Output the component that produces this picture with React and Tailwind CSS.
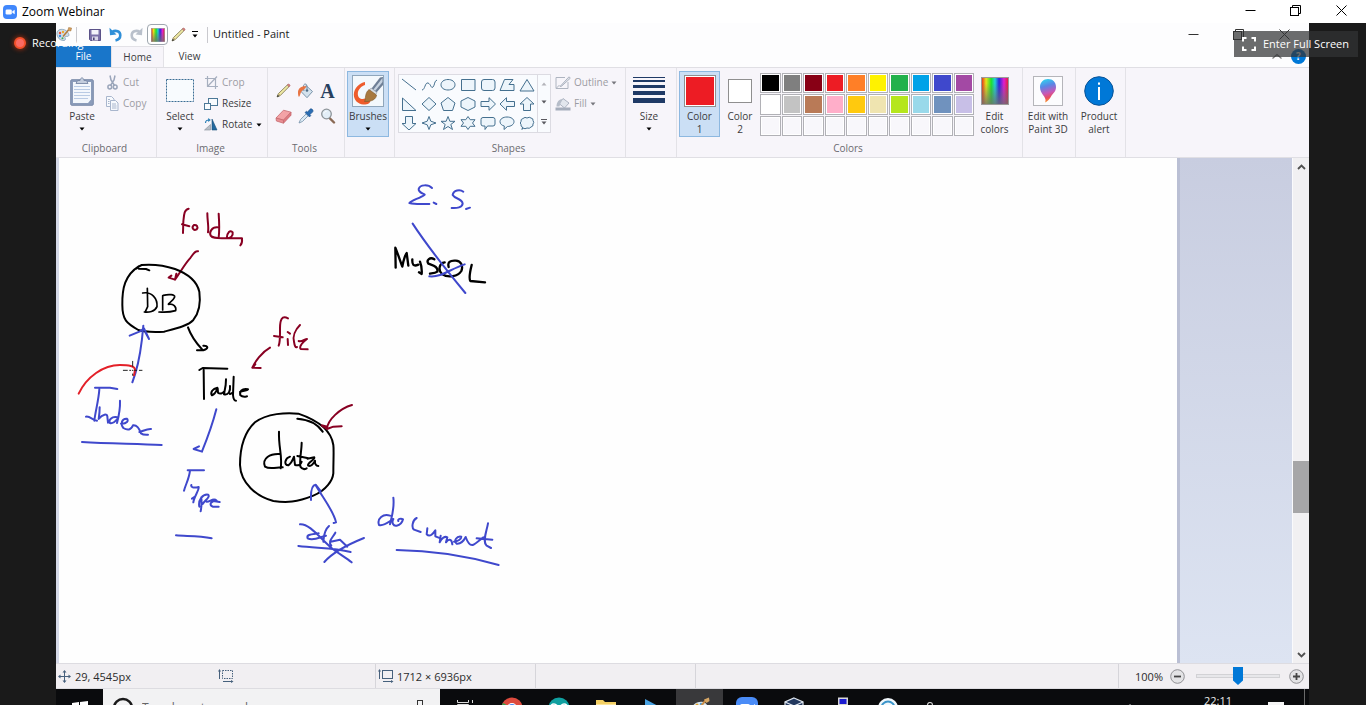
import React from "react";

const Caret = ({ className = "text-black" }) => (
  <svg width="6" height="4" viewBox="0 0 6 4" className={className} fill="currentColor" aria-hidden="true">
    <path d="M0.5 0.5h5L3 3.5z" />
  </svg>
);

/* ---------- icons ---------- */

const ZoomLogo = () => (
  <svg width="14" height="14" viewBox="0 0 14 14" aria-hidden="true">
    <rect width="14" height="14" rx="4" fill="#4087fc" />
    <rect x="2.6" y="4.4" width="6.2" height="5.2" rx="1.4" fill="#fff" />
    <path d="M9.3 6.3l2.4-1.6v4.6L9.3 7.7z" fill="#fff" />
  </svg>
);

const Palette = () => (
  <svg width="16" height="15" viewBox="0 0 16 15" aria-hidden="true">
    <path d="M1 7.5C0.5 4 3 2 6.5 2.4c3 .3 4.6 1.6 6 4 1.3 2.5-.6 3.4-2.2 3-1.4-.3-1.8.8-1 2 .8 1.300-.6 2.400-2.800 2C3.500 13 1.400 10.500 1 7.500z" fill="#cfdde8" stroke="#7f9cb3" strokeWidth=".8" />
    <circle cx="4" cy="6" r="1.200" fill="#e8553a" />
    <circle cx="7" cy="5" r="1.200" fill="#f0a92e" />
    <circle cx="4" cy="9" r="1.200" fill="#3c8be0" />
    <circle cx="6.500" cy="11.200" r="1" fill="#3fa95a" />
    <path d="M7 9.500L12.500 3" stroke="#b37a3c" strokeWidth="1.500" />
    <path d="M12 3.600L12.600 .6l3 .4-.8 3z" fill="#d9a15e" stroke="#9a6c34" strokeWidth=".5" />
  </svg>
);

const Save = () => (
  <svg width="12" height="12" viewBox="0 0 12 12" aria-hidden="true">
    <path d="M.5.500h11v11H1.500l-1-1z" fill="#7b70a8" stroke="#5b5288" />
    <rect x="2.500" y="1" width="7" height="4.500" fill="#f4f3fa" />
    <rect x="3" y="7.500" width="6" height="4" fill="#d9d6e8" />
    <rect x="4" y="8.500" width="1.600" height="2.500" fill="#4a4274" />
  </svg>
);

const Undo = ({ flip, color }) => (
  <svg width="13" height="15" viewBox="0 0 13 15" className={flip ? "-scale-x-100" : ""} aria-hidden="true">
    <path d="M3 5C7 2.500 11.300 4.500 11.300 8.300c0 2.700-1.800 4.500-4.800 5.200" fill="none" stroke={color} strokeWidth="2.600" />
    <path d="M.5.800L1 8.300l6.500-.8z" fill={color} />
  </svg>
);

const Spectrum = ({ w, h, id }) => (
  <svg width={w} height={h} viewBox="0 0 28 28" preserveAspectRatio="none" aria-hidden="true">
    <defs>
      <linearGradient id={id}>
        <stop offset="0" stopColor="#e8231c" />
        <stop offset=".17" stopColor="#e8e21a" />
        <stop offset=".36" stopColor="#1de02c" />
        <stop offset=".5" stopColor="#22d0d8" />
        <stop offset=".65" stopColor="#2a25dc" />
        <stop offset=".83" stopColor="#e01fd0" />
        <stop offset="1" stopColor="#e0202c" />
      </linearGradient>
      <linearGradient id={id + "v"} x2="0" y2="1">
        <stop offset=".2" stopColor="#6d6d6d" stopOpacity="0" />
        <stop offset="1" stopColor="#6d6d6d" stopOpacity=".8" />
      </linearGradient>
    </defs>
    <rect x=".5" y=".5" width="27" height="27" fill={`url(#${id})`} stroke="#9a9a9a" />
    <rect x="1" y="1" width="26" height="26" fill={`url(#${id}v)`} />
  </svg>
);

const Pencil = () => (
  <svg width="15" height="15" viewBox="0 0 15 15" aria-hidden="true">
    <path d="M1 14l1.400-3.400L11.300 2l1.700 1.700-8.800 8.900z" fill="#efe9a4" stroke="#77704a" strokeWidth=".8" />
    <path d="M11.300 2l.9-.9c.6-.5 2.300 1.100 1.800 1.800l-1 .8z" fill="#e08a86" stroke="#a15d5a" strokeWidth=".6" />
    <path d="M1 14l.8-2.200 1.500 1.400z" fill="#333" />
    <path d="M2.600 10.800l1.600 1.600" stroke="#c9a86a" />
  </svg>
);

const Bucket = () => (
  <svg width="17" height="16" viewBox="0 0 17 16" aria-hidden="true">
    <path d="M9 2.500l6.500 6-5.500 6.200-6-6.200z" fill="#d3e1ec" stroke="#6f8ba3" strokeWidth=".9" />
    <path d="M7 8C6 4 6.500 1 8.200 1s2 2 1.800 5.500" fill="none" stroke="#6f8ba3" />
    <circle cx="10" cy="7.500" r="1.300" fill="#4f6d87" />
    <path d="M9.500 3.500C5 2.500 1 5 1 9.500c0 2 .3 3.500 1 4.500 1.300-1 1.300-4.500 2.500-5.500 1-1.200 3.500-2.500 5-5z" fill="#e87442" />
  </svg>
);

const Eraser = () => (
  <svg width="17" height="15" viewBox="0 0 17 15" aria-hidden="true">
    <path d="M1 9L8.500 1.200l7.500 2-7.500 8z" fill="#f3a3a6" stroke="#c76b70" strokeWidth=".8" />
    <path d="M1 9l7.500 2.200v3L1.400 12z" fill="#e98f94" stroke="#c76b70" strokeWidth=".8" />
    <path d="M8.500 11.200l7.500-8v3l-7.500 8z" fill="#e07a80" stroke="#c76b70" strokeWidth=".8" />
  </svg>
);

const Picker = () => (
  <svg width="16" height="16" viewBox="0 0 16 16" aria-hidden="true">
    <path d="M1 15l1.500-3.500 5.800-5.800 2 2-5.800 5.800z" fill="#dbe9f4" stroke="#7590a8" strokeWidth=".8" />
    <path d="M7 4.500l1.500-1.200 1 .8L12 1.200c1.500-1.200 3.800.8 2.800 2.600L12 6.600l.8 1-1.300 1.400z" fill="#2b6db3" stroke="#1c4f87" strokeWidth=".6" />
  </svg>
);

const Magnifier = () => (
  <svg width="16" height="16" viewBox="0 0 16 16" aria-hidden="true">
    <path d="M9.500 10l4.500 4.500" stroke="#8a6a55" strokeWidth="2.400" strokeLinecap="round" />
    <circle cx="6.500" cy="6" r="4.800" fill="#e3eef7" stroke="#8d9499" strokeWidth="1.300" />
    <path d="M3.800 5.500c.4-1.500 1.300-2 2.700-2" fill="none" stroke="#fff" />
  </svg>
);

const PasteIcon = () => (
  <svg width="24" height="29" viewBox="0 0 24 29" aria-hidden="true">
    <rect x=".7" y="2.700" width="22.600" height="25.600" rx="1.200" fill="#8b9cba" stroke="#7c8dab" />
    <path d="M3 5h18v17.500L18 26H3z" fill="#f3f7fc" />
    <path d="M4 9.500h16M4 12.500h16M4 15.500h16M4 18.500h16M4 21.500h14" stroke="#b9cbe4" strokeWidth="1.200" />
    <path d="M6 6.500l1.500-3H10C10.500 0 13.500 0 14 3.500h2.500l1.500 3z" fill="#c3cddd" stroke="#7788a5" strokeWidth=".9" />
  </svg>
);

const Cut = () => (
  <svg width="11" height="15" viewBox="0 0 11 15" fill="none" stroke="#9aa5ba" aria-hidden="true">
    <path d="M3 .5L4 5l3.500 5.500M8 .5L7 5l-3.500 5.500" strokeWidth="1.500" />
    <circle cx="2.800" cy="12" r="1.900" strokeWidth="1.500" />
    <circle cx="8.200" cy="12" r="1.900" strokeWidth="1.500" />
  </svg>
);

const Copy = () => (
  <svg width="13" height="15" viewBox="0 0 13 15" fill="#f7f9fd" stroke="#a9b6cd" aria-hidden="true">
    <path d="M.5.500h5l2.500 2.500v7.500H.500z" />
    <path d="M4.500 4.500h5l2.500 2.500v7.500H4.500z" />
    <path d="M6 8h4M6 10h4.500M6 12h4.500M2 3.500h2M2 5.500h1.500M2 7.500h1.500" />
  </svg>
);

const SelectIcon = () => (
  <svg width="28" height="24" viewBox="0 0 28 24" aria-hidden="true">
    <rect x=".5" y=".5" width="27" height="22" fill="#f8fbfe" stroke="#3a6d94" strokeDasharray="2 1" />
  </svg>
);

const Crop = () => (
  <svg width="13" height="13" viewBox="0 0 13 13" fill="none" stroke="#a7afbf" strokeWidth="1.200" aria-hidden="true">
    <path d="M2.500 0v10.500H13M0 2.500h10.500V13M2.500 10.500L12 .5" />
  </svg>
);

const Resize = () => (
  <svg width="14" height="12" viewBox="0 0 14 12" fill="#f8fbfe" stroke="#4c7897" aria-hidden="true">
    <rect x="4.500" y=".5" width="9" height="7" />
    <rect x=".5" y="5.500" width="6" height="6" />
  </svg>
);

const Rotate = () => (
  <svg width="14" height="13" viewBox="0 0 14 13" aria-hidden="true">
    <path d="M8 1l5 11H8z" fill="#24699e" stroke="#1c517b" strokeWidth=".6" />
    <path d="M6.500 6.500V12H.5z" fill="#b8bec6" stroke="#858d98" strokeWidth=".6" />
    <path d="M1.500 5C1.500 3 3 2 5 2" fill="none" stroke="#2a7fb5" strokeWidth="1.200" />
    <path d="M4.200 0l2.600 2-2.600 2z" fill="#2a7fb5" />
  </svg>
);

const BrushArt = () => (
  <svg width="32" height="32" viewBox="0 0 32 32" aria-hidden="true">
    <rect x=".5" y=".5" width="31" height="31" fill="#f3f8fc" stroke="#8fa6bb" />
    <path d="M13 7C7.500 8 2 13 1.800 19.500c0 5.500 4 9.500 9.500 10 4.500.2 7-1.500 7-3.500l-5-2.500c-4 1.500-7.500-.5-7.500-4.500C5.800 14.500 9.500 11 13 10z" fill="#ee5c2c" />
    <path d="M19.500 13.500L28 2.500l3-.5v8l-6.500 7.500z" fill="#6e7f96" />
    <path d="M21.500 14.500L30.500 3v4L23 16z" fill="#c5d2e0" />
    <path d="M19 13l6 4.500-2 3-6-4.500z" fill="#d8dde3" stroke="#8d97a3" strokeWidth=".6" />
    <path d="M17 14.500l7.500 5.500c0 4-5 7-12 6.500C14 24 12.500 18 17 14.500z" fill="#a8793f" stroke="#80592b" strokeWidth=".6" />
  </svg>
);

const OutlineIcon = () => (
  <svg width="16" height="14" viewBox="0 0 16 14" fill="none" stroke="#aeb4c0" aria-hidden="true">
    <path d="M10 1.500H1v11h12V6" />
    <path d="M5 10.500L14 .8l1.300 1.400-8.700 8z" fill="#dfe3ea" />
    <path d="M1.500 12l3-3" />
  </svg>
);

const FillIcon = () => (
  <svg width="16" height="14" viewBox="0 0 16 14" aria-hidden="true">
    <path d="M8 1.500l6 4.500-4.500 5L4 6.500z" fill="#e2e6ed" stroke="#a5adbb" strokeWidth=".9" />
    <path d="M8 2C4 2 1.500 5 1.500 9.500h3C5 7 6 5 8 2z" fill="#b6bdc9" />
    <rect x=".5" y="10.500" width="15" height="3" fill="#a5adbb" />
  </svg>
);

const SizeIcon = () => (
  <svg width="32" height="28" viewBox="0 0 32 28" fill="#1f3a66" aria-hidden="true">
    <rect width="32" height="1" />
    <rect y="3" width="32" height="2" />
    <rect y="8" width="32" height="3" />
    <rect y="14" width="32" height="4" />
    <rect y="21" width="32" height="5" />
  </svg>
);

const Paint3D = () => (
  <svg width="30" height="30" viewBox="0 0 30 30" aria-hidden="true">
    <defs>
      <linearGradient id="p3d" x1=".3" y1="0" x2=".5" y2="1">
        <stop offset="0" stopColor="#2fd3ee" />
        <stop offset=".3" stopColor="#5a86e6" />
        <stop offset=".6" stopColor="#c657b8" />
        <stop offset=".8" stopColor="#ea4c60" />
        <stop offset="1" stopColor="#f9a21c" />
      </linearGradient>
    </defs>
    <rect x=".5" y=".5" width="29" height="29" fill="#fcfcfe" stroke="#b5b5ba" />
    <path d="M15 3c5 0 8 3.500 8 8 0 5-3.500 6.500-5 9.500-1 2.500-3.500 5-6 6 1.500-3-.5-5.500-2-7.500-1.500-2.300-3-4.500-3-8C7 6.500 10.500 3 15 3z" fill="url(#p3d)" />
  </svg>
);

const InfoIcon = () => (
  <svg width="30" height="30" viewBox="0 0 30 30" aria-hidden="true">
    <circle cx="15" cy="15" r="14.300" fill="#0078d7" stroke="#0a5396" />
    <rect x="14" y="11" width="2" height="13" fill="#fff" />
    <rect x="14" y="6.500" width="2" height="2.200" fill="#fff" />
  </svg>
);

const WinMin = () => (
  <svg width="11" height="11" viewBox="0 0 11 11" aria-hidden="true"><path d="M.5 5.500h10" stroke="currentColor" /></svg>
);
const WinRestore = () => (
  <svg width="11" height="11" viewBox="0 0 11 11" fill="none" stroke="currentColor" aria-hidden="true">
    <rect x=".5" y="2.500" width="8" height="8" />
    <path d="M2.500 2.500v-2h8v8h-2" />
  </svg>
);
const WinClose = () => (
  <svg width="11" height="11" viewBox="0 0 11 11" aria-hidden="true"><path d="M.5.500l10 10M10.500.500l-10 10" stroke="currentColor" /></svg>
);

const WindowButtons = ({ className }) => (
  <div className={"flex items-center " + className}>
    <button type="button" aria-label="Minimize" className="flex w-[45px] justify-center"><WinMin /></button>
    <button type="button" aria-label="Restore" className="flex w-[45px] justify-center"><WinRestore /></button>
    <button type="button" aria-label="Close" className="flex w-[46px] justify-center"><WinClose /></button>
  </div>
);

/* ---------- ribbon ---------- */

const Group = ({ label, width, children }) => (
  <section aria-label={label} className={"flex flex-none flex-col border-r border-[#e3e2e7] " + width}>
    <div className="flex flex-1 pt-[3px]">{children}</div>
    <div className="h-[17px] pr-[3px] text-center leading-[17px] text-[#6b6b70]">{label}</div>
  </section>
);

const BigButton = ({ icon, lines, caret, className = "" }) => (
  <button type="button" className={"flex h-[66px] flex-col items-center border " + (className || "border-transparent")}>
    <span className="flex h-[38px] flex-none items-center justify-center">{icon}</span>
    {lines.map((l) => (
      <span key={l} className="whitespace-nowrap leading-[13px]">{l}</span>
    ))}
    {caret && <span className="flex h-3 items-center"><Caret /></span>}
  </button>
);

const RowButton = ({ icon, text, caret, muted }) => (
  <button type="button" className={"flex h-[21px] items-center gap-[3px] " + (muted ? "text-[#9c9ca3]" : "text-[#3b3b40]")}>
    <span className="flex w-4 justify-center">{icon}</span>
    <span>{text}</span>
    {caret && <Caret className={muted ? "text-[#77777d]" : "text-black"} />}
  </button>
);

const shapes = [
  ["Line", "M1 1l14 11"],
  ["Curve", "M1 12C4 12 4 4 7 5s3 6 5 4 1-6 4-7"],
  ["Oval", "M8 1.500c4 0 7 2.200 7 5.300S12 12 8 12 1 9.900 1 6.800 4 1.500 8 1.500z"],
  ["Rectangle", "M1.500 1.500h13.500v11H1.500z"],
  ["Rounded rectangle", "M4 1.500h8.500q2.500 0 2.500 2.500v6q0 2.500-2.500 2.500H4Q1.500 12.500 1.500 10V4Q1.500 1.500 4 1.500z"],
  ["Polygon", "M5.500 1.500h8.500L10 6.500h5v6H1z"],
  ["Triangle", "M8 1.500l7 11.500H1z"],
  ["Right triangle", "M1.500 1v12.500H15z"],
  ["Diamond", "M8 .5l7 6.500-7 6.500L1 7z"],
  ["Pentagon", "M8 .5l7 5.500-2.500 7.500h-9L1 6z"],
  ["Hexagon", "M8 .5l7 3.500v6l-7 3.500L1 10V4z"],
  ["Right arrow", "M1 4.500H9V.700L15.500 7 9 13.300V9.500H1z"],
  ["Left arrow", "M15.500 4.500H7.500V.700L1 7l6.500 6.300V9.500h8z"],
  ["Up arrow", "M8 .5l7 6.500h-3.500v6.500h-7V7H1z"],
  ["Down arrow", "M8 14l7-6.500h-3.500V.500h-7v7H1z"],
  ["Four-point star", "M8 .5l1.800 4.700L15 7 9.800 8.800 8 13.500 6.200 8.800 1 7l5.200-1.800z"],
  ["Five-point star", "M8 .5l1.900 4.800H15l-4.200 3.200 1.700 5L8 10.500 3.500 13.500l1.700-5L1 5.300h5.100z"],
  ["Six-point star", "M8 .5l2.200 3.200H15L12.500 7l2.500 3.300h-4.800L8 13.500l-2.200-3.200H1L3.500 7 1 3.700h4.800z"],
  ["Rounded callout", "M3 1.500h10q2 0 2 2v4.500q0 2-2 2H7.500L5 13.500V10H3Q1 10 1 8V3.500q0-2 2-2z"],
  ["Oval callout", "M8 1c4 0 7 2 7 4.700S12 10.500 8.500 10.500L5 13.500l.3-3.500C3 9.500 1 8 1 5.700 1 3 4 1 8 1z"],
  ["Cloud callout", "M4 2.500q2-2 4-.5 2.500-1.500 4 0 2.500.5 2 2.500 1.500 2 0 3.500.5 2.500-2 3-1.500 2-4 1-2 1.500-4 0L3 13.500l.5-2.500q-2-.5-1.500-2.500-1.500-1.500 0-3-.5-2.500 2-3z"],
];

const palette = [
  ["Black", "bg-black"], ["Gray", "bg-[#7f7f7f]"], ["Dark red", "bg-[#880015]"], ["Red", "bg-[#ed1c24]"], ["Orange", "bg-[#ff7f27]"],
  ["Yellow", "bg-[#fff200]"], ["Green", "bg-[#22b14c]"], ["Turquoise", "bg-[#00a2e8]"], ["Indigo", "bg-[#3f48cc]"], ["Purple", "bg-[#a349a4]"],
  ["White", "bg-white"], ["Light gray", "bg-[#c3c3c3]"], ["Brown", "bg-[#b97a57]"], ["Rose", "bg-[#ffaec9]"], ["Gold", "bg-[#ffc90e]"],
  ["Light yellow", "bg-[#efe4b0]"], ["Lime", "bg-[#b5e61d]"], ["Light turquoise", "bg-[#99d9ea]"], ["Blue-gray", "bg-[#7092be]"], ["Lavender", "bg-[#c8bfe7]"],
  ...Array.from({ length: 10 }, (_, i) => [`Custom color ${i + 1}`, "bg-[#f8f7fb]"]),
];

const Ribbon = () => (
  <div className="flex h-[91px] flex-none overflow-hidden border-y border-[#e0dfe4] bg-[#f7f5fa] text-[10px] text-[#3b3b40]">
    <Group label="Clipboard" width="w-[101px]">
      <BigButton icon={<PasteIcon />} lines={["Paste"]} caret className="ml-1 w-11 border-transparent" />
      <div className="flex flex-col pt-px">
        <RowButton icon={<Cut />} text="Cut" muted />
        <RowButton icon={<Copy />} text="Copy" muted />
      </div>
    </Group>
    <Group label="Image" width="w-[111px]">
      <BigButton icon={<SelectIcon />} lines={["Select"]} caret className="w-[46px] border-transparent" />
      <div className="flex flex-col pt-px">
        <RowButton icon={<Crop />} text="Crop" muted />
        <RowButton icon={<Resize />} text="Resize" />
        <RowButton icon={<Rotate />} text="Rotate" caret />
      </div>
    </Group>
    <Group label="Tools" width="w-[77px]">
      <div className="ml-[7px] grid h-[58px] grid-cols-3 grid-rows-2 place-items-center gap-x-[5px] pt-[7px]">
        <button type="button" aria-label="Pencil"><Pencil /></button>
        <button type="button" aria-label="Fill with color"><Bucket /></button>
        <button type="button" aria-label="Text" className="w-4 font-['Liberation_Serif',serif] text-[20px] font-bold leading-5 text-[#27405f]">A</button>
        <button type="button" aria-label="Eraser"><Eraser /></button>
        <button type="button" aria-label="Color picker"><Picker /></button>
        <button type="button" aria-label="Magnifier"><Magnifier /></button>
      </div>
    </Group>
    <Group label="" width="w-[50px]">
      <BigButton icon={<BrushArt />} lines={["Brushes"]} caret className="ml-[2px] w-[42px] border-[#8db8e0] bg-[#cbdff5]" />
    </Group>
    <Group label="Shapes" width="w-[231px]">
      <div className="ml-[3px] mt-[3px] flex h-[59px] w-[153px] border border-[#dcdbe2] bg-[#f9fbfe]">
        <div className="grid flex-1 grid-cols-7 grid-rows-3 place-items-center">
          {shapes.map(([name, d]) => (
            <button key={name} type="button" aria-label={name}>
              <svg width="16" height="14" viewBox="0 0 16 14" fill={name === "Line" || name === "Curve" ? "none" : "#edf5fb"} stroke="#45708f" strokeWidth="1" aria-hidden="true">
                <path d={d} />
              </svg>
            </button>
          ))}
        </div>
        <div className="flex w-[13px] flex-col items-center justify-around border-l border-[#dcdbe2]">
          <button type="button" aria-label="Scroll up" className="rotate-180"><Caret className="text-[#b4b4ba]" /></button>
          <button type="button" aria-label="Scroll down"><Caret className="text-[#5a5a60]" /></button>
          <button type="button" aria-label="More shapes" className="flex flex-col items-center gap-px border-t border-[#5a5a60] pt-px"><Caret className="text-[#5a5a60]" /></button>
        </div>
      </div>
      <div className="ml-1 flex flex-col pt-px">
        <RowButton icon={<OutlineIcon />} text="Outline" caret muted />
        <RowButton icon={<FillIcon />} text="Fill" caret muted />
      </div>
    </Group>
    <Group label="" width="w-[51px]">
      <BigButton icon={<SizeIcon />} lines={["Size"]} caret className="ml-px w-11 border-transparent" />
    </Group>
    <Group label="Colors" width="w-[346px]">
      <BigButton
        icon={<span className="block border border-[#8f8f8f] bg-white p-px"><span className="block h-[28px] w-[28px] bg-[#ed1c24]" /></span>}
        lines={["Color", "1"]}
        className="ml-[2px] w-[41px] border-[#8db8e0] bg-[#cbdff5]"
      />
      <BigButton icon={<span className="block h-6 w-6 border border-[#8f8f8f] bg-white" />} lines={["Color", "2"]} className="w-[40px] border-transparent" />
      <div className="mt-[2px] grid h-[63px] w-[214px] grid-cols-10 grid-rows-3 gap-px">
        {palette.map(([name, bg]) => (
          <button key={name} type="button" aria-label={name} className="flex border border-[#b1b1b6] bg-white p-px">
            <span className={"flex-1 " + bg} />
          </button>
        ))}
      </div>
      <BigButton icon={<Spectrum w={28} h={28} id="spec" />} lines={["Edit", "colors"]} className="w-[41px] border-transparent" />
    </Group>
    <Group label="" width="w-[53px]">
      <BigButton icon={<Paint3D />} lines={["Edit with", "Paint 3D"]} className="ml-[2px] w-[46px] border-transparent" />
    </Group>
    <Group label="" width="w-[50px]">
      <BigButton icon={<InfoIcon />} lines={["Product", "alert"]} className="w-[46px] border-transparent" />
    </Group>
  </div>
);

/* ---------- drawing ---------- */

const Ink = ({ x, y, color, d, w = 6 }) => (
  <g transform={`translate(${x} ${y}) scale(.33333)`}>
    <path d={d} fill="none" stroke={color} strokeWidth={w} strokeLinecap="round" strokeLinejoin="round" />
  </g>
);

const BLUE = "#3f48cc";
const MAROON = "#880022";

const Drawing = () => (
  <svg width="460" height="430" viewBox="59 158 460 430" className="flex-none" role="img" aria-label="Sketch of E.S. and MySQL terms">
    {/* folder */}
    <Ink x={60} y={195} color={MAROON} d="M386 41C372 44 372 60 370 80L369 114M366 88L388 94M402 90C393 98 400 108 410 103C416 95 410 89 402 90M442 55C442 80 447 95 444 112M476 56C478 85 479 105 476 128M472 97C455 96 447 112 452 122C458 131 475 129 500 130C501 112 511 103 518 112C520 122 512 130 500 130L546 130C547 140 546 146 541 151" />
    <Ink x={60} y={195} color={MAROON} d="M414 169C404 166 400 178 390 190C375 206 362 230 345 254M349 236L345 254L326 248L334 242" />
    {/* database circle */}
    <Ink x={60} y={195} color="#000" d="M236 214C195 240 186 280 187 330C187 375 200 385 235 405C255 412 290 411 312 410C350 400 385 392 400 375C420 350 422 320 418 290C410 255 380 235 345 222C310 210 270 208 245 210C235 214 229 221 229 221M236 221L258 222L268 226" />
    <Ink x={60} y={195} color="#000" w={5} d="M262 280L263 335L256 350M248 294C275 289 293 310 291 335C285 350 265 353 253 351M308 302L308 345M310 301C325 297 346 298 344 306C340 318 325 325 325 328C340 325 350 335 347 347C330 352 310 352 297 351" />
    <Ink x={60} y={195} color="#000" d="M384 397C392 420 405 440 427 464M411 466L430 466C446 462 446 451 430 452" />
    <Ink x={60} y={195} color={BLUE} d="M217 562L226 535C240 490 246 440 250 392M209 422L240 409L252 400L267 432L256 412" />
    {/* file */}
    <Ink x={60} y={195} color={MAROON} d="M684 370C665 360 660 375 660 400C660 420 661 440 656 452M642 423L668 427M683 411L690 416M683 432L684 450M720 390C705 405 698 425 702 440C704 455 707 458 711 456M716 438C724 442 735 432 741 432C730 440 716 454 722 462L743 463" />
    <Ink x={60} y={195} color={MAROON} d="M630 458C605 472 585 500 577 518L602 519M577 518L586 508" />
    {/* index */}
    <Ink x={60} y={350} color="#e32028" d="M56 131C80 80 130 45 180 45C205 45 226 48 225 60L222 76" />
    <Ink x={60} y={350} color="#222" w={3} d="M190 61H202M209 61H212M217 61H219M224 61H230M238 61H246M218 34V49M218 72V76" />
    <Ink x={60} y={350} color={BLUE} d="M105 113L150 113L172 117M118 118C116 150 106 185 103 212M78 200C90 198 98 210 111 212M119 172C119 190 117 200 116 207C128 192 142 190 142 200L144 218M180 152C181 180 176 200 171 219M172 202C155 198 144 212 150 219C160 222 168 212 174 205M183 221C200 222 208 212 200 206C186 205 180 222 190 234C203 242 213 240 219 226C232 224 238 236 243 250C250 255 255 254 264 254M238 246C248 244 260 236 273 237" />
    <Ink x={60} y={350} color={BLUE} d="M66 276C150 281 230 281 305 285" />
    {/* table */}
    <Ink x={60} y={350} color="#000" d="M418 60L428 54L502 56M431 60L432 147M472 113C458 115 450 128 456 136C465 132 470 122 473 115L474 128C480 133 488 130 492 125M498 88L497 105L492 133C505 136 512 124 510 108M521 80L519 135C520 148 525 152 528 152M510 132L519 128M540 126C552 122 562 121 564 118C545 114 538 125 541 136C548 142 555 140 561 139" />
    <Ink x={60} y={350} color={BLUE} d="M469 178C457 225 442 265 426 304M417 289L401 297L426 305" />
    {/* type */}
    <Ink x={60} y={350} color={BLUE} d="M383 361L432 361M390 361C388 385 378 400 372 422M394 405C392 412 400 415 416 411C418 420 402 440 400 457M396 446L405 440M424 442C425 455 425 470 422 484M418 470C414 450 428 432 444 434C452 440 436 450 428 462M440 455C450 456 460 442 470 452C452 452 446 465 458 470L476 470M455 452L479 456" />
    <Ink x={60} y={350} color={BLUE} d="M348 556C380 559 415 556 455 565" />
    {/* data circle */}
    <Ink x={60} y={350} color="#000" d="M715 191C680 187 620 190 585 217C555 245 540 290 540 345C542 400 590 440 640 453C680 459 710 457 760 437C800 420 818 390 820 370C820 330 822 300 820 285C815 250 785 215 715 191M712 206C750 209 775 225 788 245" />
    <Ink x={60} y={350} color="#000" d="M657 245C655 290 668 320 662 355M660 312C630 310 605 325 615 350C630 360 655 350 668 352M690 320C675 325 670 345 685 346C695 340 700 325 702 320L705 345C715 348 722 345 725 335M725 278C725 300 718 330 721 350C728 360 735 358 740 355M712 318L745 325M742 326L763 322C766 328 742 338 744 346C752 352 762 340 765 332C764 342 768 348 775 348" />
    <Ink x={290} y={395} color={MAROON} d="M186 30C150 40 112 75 111 102L130 95L155 94M111 102L95 91L112 95" />
    <Ink x={290} y={395} color={BLUE} d="M131 384L138 382C132 350 100 310 78 272M63 315C62 290 66 270 77 269L92 288" />
    {/* crossed-out word */}
    <Ink x={290} y={395} color={BLUE} d="M30 388C60 386 90 430 128 462C150 478 170 490 185 502M103 501C130 470 170 450 222 429M25 453C80 460 130 458 182 471M117 393C100 408 102 430 100 440M86 415C65 418 48 418 53 430C70 440 92 425 108 422M136 413C128 428 112 440 124 452M122 440L150 434L172 455" />
    {/* document */}
    <Ink x={290} y={395} color={BLUE} d="M310 308C314 340 305 365 300 388M300 362C280 355 260 370 267 390C285 394 298 378 310 372C304 384 310 394 320 392C330 390 337 382 339 373C333 369 322 372 325 378M380 369C367 375 364 398 372 404L392 411M412 400L410 418C420 428 430 415 436 406L436 424L446 428M452 422L449 442C455 428 465 423 472 427L468 442C475 432 485 430 487 448M492 440C504 440 514 432 514 425C500 422 490 438 500 446C510 447 520 440 527 426C532 440 538 452 548 450C560 445 572 432 580 427M594 385C590 410 576 440 590 452L603 459M560 430L607 434" />
    <Ink x={290} y={395} color={BLUE} d="M320 465C420 466 520 480 626 510" />
    {/* E.S. over crossed-out MySQL */}
    <Ink x={370} y={175} color={BLUE} d="M186 39C175 28 150 28 146 42C145 52 158 55 164 59C150 70 125 75 118 84C140 90 168 86 178 87M191 83L199 87M280 50C270 42 250 45 248 60C255 72 275 70 278 85C278 98 260 100 245 99M288 102L300 98" />
    <Ink x={370} y={175} color="#000" w={7} d="M77 278L76 218C85 240 92 262 97 275C100 255 108 235 110 234L115 272M127 253C126 268 130 276 145 269M150 260C156 275 156 285 155 297L147 292M193 253C180 245 168 255 175 266C190 272 205 275 202 290C195 295 185 295 180 296M224 262C207 264 204 286 216 297C235 310 264 304 274 288C280 273 273 256 256 257C240 256 232 262 236 276M305 270C300 290 296 310 301 318L345 322" />
    <Ink x={370} y={175} color={BLUE} d="M128 146C160 195 215 268 286 354M178 304C215 308 240 282 284 268" />
  </svg>
);

/* ---------- paint window ---------- */

const Sep = ({ h = "h-4" }) => <span className={"block w-px flex-none bg-[#c9c9ce] " + h} />;

const PaintTitle = () => (
  <header className="flex h-[23px] flex-none items-center bg-[#fdfdfe] text-[11px] text-[#1c1c1c]">
    <Palette />
    <span className="ml-1"><Sep /></span>
    <div className="ml-3 flex items-center gap-2">
      <button type="button" aria-label="Save"><Save /></button>
      <button type="button" aria-label="Undo"><Undo color="#2f8fd8" /></button>
      <button type="button" aria-label="Redo"><Undo color="#b9c0cb" flip /></button>
    </div>
    <button type="button" aria-label="Edit colors" className="ml-1 flex h-[21px] w-[21px] items-center justify-center rounded-sm border border-[#9ea6ae] bg-white"><Spectrum w={14} h={14} id="specSmall" /></button>
    <button type="button" aria-label="Pencil" className="ml-[3px]"><Pencil /></button>
    <button type="button" aria-label="Customize toolbar" className="ml-[6px] flex flex-col items-center border-t border-black pt-0.5"><Caret /></button>
    <span className="ml-[9px]"><Sep /></span>
    <h1 className="ml-[5px]">Untitled - Paint</h1>
    <WindowButtons className="ml-auto mr-[2px] text-[#333]" />
  </header>
);

const Tabs = () => (
  <nav className="flex h-[21px] flex-none bg-[#fdfdfe] text-[10px] text-[#3b3b40]">
    <button type="button" className="w-[55px] bg-[#1976ca] text-white">File</button>
    <button type="button" className="w-[53px] border-x border-t border-[#e3e2e7] bg-[#f7f5fa]">Home</button>
    <button type="button" className="w-[51px]">View</button>
    <div className="ml-auto flex items-center gap-[8px] pr-[3px]">
      <button type="button" aria-label="Collapse ribbon">
        <svg width="12" height="7" viewBox="0 0 12 7" aria-hidden="true"><path d="M1.500 5.500L6 1.500l4.500 4" fill="none" stroke="#777" strokeWidth="1.200" /></svg>
      </button>
      <button type="button" aria-label="Help" className="h-[15px] w-[15px] rounded-full bg-[#0078d7] font-bold leading-[15px] text-white">?</button>
    </div>
  </nav>
);

const Workspace = () => (
  <main className="flex min-h-0 flex-1 bg-[#c8cde0]">
    <div className="flex flex-1 overflow-hidden border-l-[3px] border-[#d5d9e8] bg-[#fefefe]">
      <Drawing />
    </div>
    <div className="w-[115px] flex-none border-l-[3px] border-[#babfd4] bg-linear-to-b from-[#c8cde0] to-[#dde4f2]" />
    <div className="flex w-[17px] flex-none flex-col items-center border-l border-[#fafafc] bg-[#f1f0f2]">
      <button type="button" aria-label="Scroll up" className="flex h-[18px] items-center">
        <svg width="9" height="6" viewBox="0 0 9 6" aria-hidden="true"><path d="M1 5l3.500-3.500L8 5" fill="none" stroke="#505050" strokeWidth="1.800" /></svg>
      </button>
      <div className="grow-[285]" />
      <div className="w-full grow-[52] bg-[#a6a6a8]" />
      <div className="grow-[134]" />
      <button type="button" aria-label="Scroll down" className="flex h-4 items-center">
        <svg width="9" height="6" viewBox="0 0 9 6" aria-hidden="true"><path d="M1 1l3.500 3.500L8 1" fill="none" stroke="#505050" strokeWidth="1.800" /></svg>
      </button>
    </div>
  </main>
);

const MoveIcon = () => (
  <svg width="13" height="13" viewBox="0 0 13 13" aria-hidden="true">
    <path d="M6.500 1v11M1 6.500h11" stroke="#46607c" />
    <path d="M6.500 0l2 2.500h-4zM6.500 13l2-2.500h-4zM0 6.500l2.500-2v4zM13 6.500l-2.500-2v4z" fill="#46607c" />
  </svg>
);

const DimIcon = ({ dashed }) => (
  <svg width="16" height="14" viewBox="0 0 16 14" fill="none" stroke="#46607c" aria-hidden="true">
    <rect x="4.500" y="1.500" width="10" height="8" strokeDasharray={dashed ? "1.500 1" : undefined} />
    <path d="M1.500 2v8M5 12.500h9" />
    <path d="M1.500 0l1.500 2.500H0zM15.500 12.500L13 11v3z" fill="#46607c" stroke="none" />
  </svg>
);

const StatusBar = () => (
  <footer className="flex h-[26px] flex-none items-center border-y border-[#dddce1] bg-[#f1eff2] text-[11px] text-[#2b2b2b]">
    <div className="flex h-full w-[160px] items-center gap-1 pl-[2px]"><MoveIcon /><span className="pt-[2px]">29, 4545px</span></div>
    <div className="flex h-full w-[160px] items-center border-r border-[#d6d5da] pl-[2px]"><DimIcon dashed /></div>
    <div className="flex h-full w-[160px] items-center gap-[3px] border-r border-[#d6d5da] pl-[2px]"><DimIcon /><span className="pt-[2px]">1712 × 6936px</span></div>
    <div className="h-full w-[160px] border-r border-[#d6d5da]" />
    <div className="ml-auto flex h-full items-center border-l border-[#d6d5da] pl-4 pr-[5px]">
      <label htmlFor="zoom" className="pt-[2px]">100%</label>
      <button type="button" aria-label="Zoom out" className="ml-[7px]">
        <svg width="15" height="15" viewBox="0 0 15 15" aria-hidden="true"><circle cx="7.500" cy="7.500" r="6.800" fill="#e3e3e5" stroke="#909094" /><path d="M4 7.500h7" stroke="#444" strokeWidth="1.800" /></svg>
      </button>
      <input
        id="zoom"
        type="range"
        defaultValue="50"
        className="ml-[11px] h-5 w-[84px] appearance-none bg-transparent [&::-webkit-slider-runnable-track]:h-[4px] [&::-webkit-slider-runnable-track]:border [&::-webkit-slider-runnable-track]:border-[#d2d2d5] [&::-webkit-slider-runnable-track]:bg-[#e7e7ea] [&::-webkit-slider-thumb]:-mt-2 [&::-webkit-slider-thumb]:h-[18px] [&::-webkit-slider-thumb]:w-[10px] [&::-webkit-slider-thumb]:appearance-none [&::-webkit-slider-thumb]:bg-[#0078d7] [&::-webkit-slider-thumb]:[clip-path:polygon(0_0,100%_0,100%_75%,50%_100%,0_75%)]"
      />
      <button type="button" aria-label="Zoom in" className="ml-[9px]">
        <svg width="15" height="15" viewBox="0 0 15 15" aria-hidden="true"><circle cx="7.500" cy="7.500" r="6.800" fill="#e3e3e5" stroke="#909094" /><path d="M4 7.500h7M7.500 4v7" stroke="#444" strokeWidth="1.800" /></svg>
      </button>
    </div>
  </footer>
);

/* ---------- taskbar ---------- */

const apps = [
  ["Task view", <svg width="18" height="18" viewBox="0 0 18 18" fill="none" stroke="#ddd"><path d="M1.500 1v2.500h11V1M1.500 5.500h11v7h-11zM16.500 1v3M16.500 7v8" /></svg>],
  ["Chrome", <svg width="22" height="22" viewBox="0 0 22 22"><circle cx="11" cy="11" r="10.500" fill="#dd4b3e" /><path d="M11 11h10.500A10.500 10.500 0 0 1 10 21.500z" fill="#fbc93d" /><path d="M11 11L2 6a10.500 10.500 0 0 0 8 15.500z" fill="#2da94f" /><circle cx="11" cy="11" r="5" fill="#fff" /><circle cx="11" cy="11" r="4" fill="#4587f3" /></svg>],
  ["Arduino", <svg width="22" height="22" viewBox="0 0 22 22"><circle cx="11" cy="11" r="10.500" fill="#10a0a0" /><path d="M11 11c-2-3-3.500-4-5-4a4 4 0 0 0 0 8c1.500 0 3-1 5-4zm0 0c2 3 3.500 4 5 4a4 4 0 0 0 0-8c-1.500 0-3 1-5 4z" fill="none" stroke="#fff" strokeWidth="1.500" /></svg>],
  ["File Explorer", <svg width="22" height="20" viewBox="0 0 22 20"><path d="M1 2h7l2 2h11v14H1z" fill="#f3cf63" /><path d="M1 6h20v12H1z" fill="#fbe49a" /></svg>],
  ["Visual Studio Code", <svg width="18" height="20" viewBox="0 0 18 20"><path d="M1 1l16 8.500L1 18z" fill="#49a3e3" /></svg>],
  ["Paint", <svg width="22" height="22" viewBox="0 0 22 22"><path d="M2 13C3 7 9 4 14 5c4 1 5 4 4 8s-5 6-8 6-8-2-8-6z" fill="#dce8ee" /><circle cx="8" cy="8" r="1.500" fill="#e0a32a" /><circle cx="12" cy="7" r="1.200" fill="#4b9bd8" /><path d="M12 9l5-6" stroke="#c98c45" strokeWidth="2" /><path d="M15 2.500l5-2 .5 3.500-3 2z" fill="#d7a766" /></svg>],
  ["Zoom", <svg width="22" height="22" viewBox="0 0 22 22"><rect width="22" height="22" rx="6" fill="#4a8cf7" /><rect x="4" y="7" width="10" height="8" rx="2" fill="#fff" /><path d="M15 10l4-3v8l-4-3z" fill="#fff" /></svg>],
  ["VirtualBox", <svg width="20" height="22" viewBox="0 0 20 22"><path d="M10 1l9 4v11l-9 5-9-5V5z" fill="#22385e" stroke="#dfe6ef" strokeWidth="1.200" /><path d="M1 5l9 4 9-4M10 9v12" fill="none" stroke="#dfe6ef" strokeWidth="1.200" /></svg>],
  ["PuTTY", <svg width="18" height="22" viewBox="0 0 18 22"><rect x="6" y=".5" width="10" height="8" fill="#d8d8d8" /><rect x="7.500" y="2" width="7" height="5" fill="#1b1bcf" /><path d="M13 8l3 2-5 4" stroke="#f0d53a" fill="none" strokeWidth="1.500" /></svg>],
  ["Viewer", <svg width="22" height="22" viewBox="0 0 22 22"><circle cx="11" cy="11" r="10" fill="#f2f8fc" /><circle cx="11" cy="11" r="6.500" fill="none" stroke="#3a94c9" strokeWidth="2" /><circle cx="11" cy="11" r="3" fill="#3a94c9" /></svg>],
];

const TrayIcons = () => (
  <svg width="230" height="12" viewBox="0 0 230 12" fill="none" stroke="#cfcfcf" className="flex-none" aria-hidden="true">
    <circle cx="6" cy="3" r="2.500" strokeWidth="1.200" />
    <path d="M6 6v5M40 6.500l4-2 4 2M67 3v2M71 3v2M75 4.500h9v6h-9M102 6q5-3 10 0M137 5q4-2 6-1M160 8l4-3v7M167 4q4 3 2 8M202 5l4-2v9" strokeWidth="1.200" />
  </svg>
);

const Taskbar = () => (
  <div className="h-4 flex-none overflow-hidden bg-[#0a0b0d]">
    <div className="flex h-[38px] items-center">
      <button type="button" aria-label="Start" className="flex w-[47px] flex-none justify-center">
        <svg width="16" height="14" viewBox="0 0 16 14" fill="#fff" aria-hidden="true"><path d="M0 2l7-1v6H0zM8 1l8-1v7H8zM0 8h7v6l-7-1zM8 8h8v7l-8-1z" /></svg>
      </button>
      <label className="flex h-full w-[337px] flex-none items-center bg-[#f2f2f3] pl-[9px]">
        <svg width="22" height="22" viewBox="0 0 22 22" aria-hidden="true"><circle cx="11" cy="11" r="9" fill="none" stroke="#1a1a1a" strokeWidth="2.500" /></svg>
        <input type="text" aria-label="Search" placeholder="Type here to search" className="ml-2 min-w-0 flex-1 bg-transparent text-[12px] outline-none placeholder:text-[#666]" />
        <svg width="10" height="16" viewBox="0 0 10 16" fill="none" stroke="#333" className="mr-[15px]" aria-hidden="true"><rect x="2.500" y=".5" width="5" height="9" /><path d="M.5 7v3q4.500 4 9 0V7M5 12v4" /></svg>
      </label>
      <div className="flex h-full pl-px">
        {apps.map(([name, icon]) => (
          <button key={name} type="button" aria-label={name} className={"flex w-[47px] items-center justify-center " + (name === "Paint" ? "bg-[#39393b]" : "")}>{icon}</button>
        ))}
      </div>
      <div className="ml-auto flex h-full flex-none items-center text-[11px] text-[#ececec]">
        <TrayIcons />
        <span className="w-[50px] pl-2 pt-1">ENG</span>
        <time className="mr-9 self-start leading-[23px]">22:11</time>
        <button type="button" aria-label="Notifications" className="mr-5">
          <svg width="16" height="16" viewBox="0 0 16 16" aria-hidden="true"><path d="M0 2h16v11h-6l-3 3v-3H0z" fill="#f4f4f4" /><path d="M3 5.500h10" stroke="#333" /></svg>
        </button>
        <span className="mr-1 h-full w-px bg-[#6a6a6a]" />
      </div>
    </div>
  </div>
);

export default function App() {
  return (
    <div className="relative flex h-screen flex-col overflow-hidden bg-[#1a1a1a] font-['Open_Sans','Noto_Sans',sans-serif]">
      <header className="flex h-[23px] flex-none items-center bg-white pl-[3px] text-[12px] text-black">
        <ZoomLogo />
        <span className="ml-[5px]">Zoom Webinar</span>
        <WindowButtons className="ml-auto mr-[2px] pb-[2px]" />
      </header>
      <div className="ml-14 mr-[57px] flex min-h-0 flex-1 flex-col">
        <PaintTitle />
        <Tabs />
        <Ribbon />
        <Workspace />
        <StatusBar />
        <Taskbar />
      </div>
      <div className="absolute left-[14px] top-[35px] flex items-center gap-[6px] text-[11px] leading-4 text-white">
        <span className="h-3 w-3 rounded-full border-2 border-[#f3502a] bg-[#fb6a62] shadow-[0_0_4px_1px_#8a2a10]" />
        Recording
      </div>
      <button type="button" className="absolute right-2 top-[31px] flex h-[26px] items-center gap-[7px] bg-[#323335]/72 pl-2 pr-[9px] text-[11px] text-white">
        <svg width="14" height="14" viewBox="0 0 14 14" fill="none" stroke="#fff" strokeWidth="2" aria-hidden="true">
          <path d="M1 4.500V1h3.500M9.500 1H13v3.500M13 9.500V13H9.500M4.500 13H1V9.500" />
        </svg>
        Enter Full Screen
      </button>
    </div>
  );
}
